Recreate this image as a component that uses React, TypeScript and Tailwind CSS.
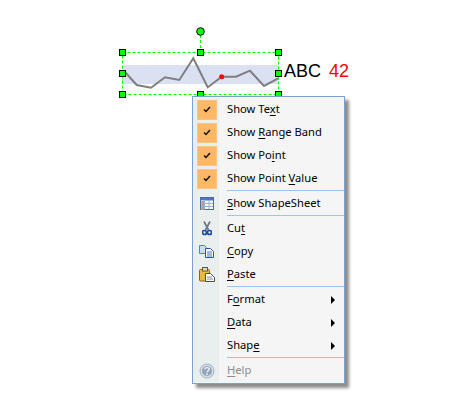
const points = "125,72 136.7,85 151,87.7 165,77.3 179.3,80 193.3,58.3 207.7,87.3 221.7,76.7 236,76.7 250,70.7 264,86 278.3,78.3";

const handles = [
  [122.5, 52.5],
  [200.5, 52.5],
  [278.5, 52.5],
  [122.5, 73.5],
  [278.5, 73.5],
  [122.5, 94.5],
  [200.5, 94.5],
  [278.5, 94.5],
];

function Shape() {
  return (
    <svg width="467" height="110" viewBox="0 0 467 110" className="absolute left-0 top-0">
      <rect x="122" y="65" width="156" height="19" fill="#d9e1f3" />
      <polyline points={points} fill="none" stroke="#7f7f7f" strokeWidth="2" />
      <circle cx="221.7" cy="76.7" r="2.5" fill="#ff0000" />
      <rect x="122.5" y="52.5" width="156" height="42" fill="none" stroke="#00ff00" strokeDasharray="3 2" />
      <line x1="200.5" y1="35" x2="200.5" y2="52" stroke="#00ff00" strokeDasharray="3 2" />
      <circle cx="200.5" cy="31.5" r="3.8" fill="#00ff00" stroke="#000" />
      {handles.map(([x, y]) => (
        <rect key={`${x}-${y}`} x={x - 3} y={y - 3} width="6" height="6" fill="#00ff00" stroke="#000" />
      ))}
    </svg>
  );
}

function CheckBox() {
  return (
    <div className="flex h-[20px] w-[20px] items-center justify-center border border-[#fbc57f] bg-[#ffb966]">
      <svg width="8" height="7" viewBox="0 0 8 7">
        <path d="M1 3.5 L3 5.5 L7 1" fill="none" stroke="#111" strokeWidth="1.5" />
      </svg>
    </div>
  );
}

function SheetIcon() {
  return (
    <svg width="14" height="13" viewBox="0 0 14 13">
      <rect x="0.5" y="0.5" width="13" height="12" fill="#f4f6fa" stroke="#4c6aa6" />
      <rect x="1" y="1" width="12" height="2.5" fill="#4f78c4" />
      <rect x="1" y="3.5" width="3.5" height="9" fill="#d6deee" />
      <path d="M4.5 4v8M9 4v8M1 6.5h12M1 9.5h12" stroke="#9dadcb" />
      <path d="M1.5 5h2.5M1.5 8h2.5M1.5 11h2.5" stroke="#d8332f" />
    </svg>
  );
}

function ScissorsIcon() {
  return (
    <svg width="10" height="15" viewBox="0 0 10 15">
      <path d="M2 0.5 L6.5 9M8 0.5 L3.5 9" stroke="#6f7986" strokeWidth="1.7" fill="none" />
      <circle cx="2.5" cy="11.5" r="2" fill="#e9eeee" stroke="#1f49a8" strokeWidth="1.7" />
      <circle cx="7.5" cy="11.5" r="2" fill="#e9eeee" stroke="#1f49a8" strokeWidth="1.7" />
    </svg>
  );
}

function CopyIcon() {
  return (
    <svg width="16" height="13" viewBox="0 0 16 13">
      <path d="M0.5 0.5h5l2 2v6h-7z" fill="#c9dcf7" stroke="#4f7fce" />
      <path d="M6.5 3.5h5l3 3v6h-8z" fill="#fff" stroke="#2456ac" />
      <path d="M8 7h5M8 9h5M8 11h5" stroke="#3f72c8" />
    </svg>
  );
}

function PasteIcon() {
  return (
    <svg width="16" height="15" viewBox="0 0 16 15">
      <rect x="0.5" y="2.5" width="10" height="11.5" rx="1" fill="#e9b93f" stroke="#8a6414" />
      <rect x="3.5" y="0.5" width="5" height="3.5" fill="#e8dcb4" stroke="#5f5a48" />
      <path d="M6.5 6.5h5l4 4v4h-9z" fill="#fff" stroke="#4d4d4d" />
      <path d="M8 10h5M8 12h6" stroke="#8a8a8a" />
    </svg>
  );
}

function HelpIcon() {
  return (
    <svg width="16" height="16" viewBox="0 0 16 16">
      <circle cx="8" cy="8" r="7" fill="#d5dde6" stroke="#a5b3c4" />
      <circle cx="8" cy="8" r="5" fill="#93a5ba" />
      <path d="M6 6.3c0-2.3 4.2-2.3 4.2 0 0 1.5-2.1 1.5-2.1 3" fill="none" stroke="#eef2f6" strokeWidth="1.4" />
      <rect x="7.3" y="10.3" width="1.6" height="1.6" fill="#eef2f6" />
    </svg>
  );
}

function Label({ before, key_, after }: { before: string; key_: string; after: string }) {
  return (
    <span>
      {before}
      <span className="underline underline-offset-2">{key_}</span>
      {after}
    </span>
  );
}

type Item = {
  before: string;
  key_: string;
  after: string;
  icon?: React.ReactNode;
  sub?: boolean;
  disabled?: boolean;
};

function Row({ item }: { item: Item }) {
  return (
    <div className="relative flex h-[23px] items-center">
      <div className="flex h-full w-[26px] shrink-0 items-center justify-center bg-[#e9eeee] pl-[1px]">{item.icon}</div>
      <div className={`flex-1 pl-[8px] ${item.disabled ? "text-[#8d8d8d]" : "text-[#000]"}`}>
        <Label before={item.before} key_={item.key_} after={item.after} />
      </div>
      {item.sub && <div className="mr-[9px] h-0 w-0 border-y-[4px] border-l-[4px] border-y-transparent border-l-black" />}
    </div>
  );
}

function Separator() {
  return (
    <div className="flex h-[2px]">
      <div className="w-[26px] bg-[#e9eeee]" />
      <div className="ml-[8px] h-[1px] flex-1 bg-[#9dc3ee]" />
    </div>
  );
}

const groups: Item[][] = [
  [
    { before: "Show Te", key_: "x", after: "t", icon: <CheckBox /> },
    { before: "Show ", key_: "R", after: "ange Band", icon: <CheckBox /> },
    { before: "Show Po", key_: "i", after: "nt", icon: <CheckBox /> },
    { before: "Show Point ", key_: "V", after: "alue", icon: <CheckBox /> },
  ],
  [{ before: "", key_: "S", after: "how ShapeSheet", icon: <SheetIcon /> }],
  [
    { before: "Cu", key_: "t", after: "", icon: <ScissorsIcon /> },
    { before: "", key_: "C", after: "opy", icon: <CopyIcon /> },
    { before: "", key_: "P", after: "aste", icon: <PasteIcon /> },
  ],
  [
    { before: "F", key_: "o", after: "rmat", sub: true },
    { before: "", key_: "D", after: "ata", sub: true },
    { before: "Shap", key_: "e", after: "", sub: true },
  ],
  [{ before: "", key_: "H", after: "elp", icon: <HelpIcon />, disabled: true }],
];

export default function App() {
  return (
    <div className="relative h-[410px] w-[467px] overflow-hidden bg-white">
      <Shape />
      <div className="absolute left-[284px] top-[61px] flex gap-[8px] text-[18px] leading-[21px] font-['Liberation_Sans',sans-serif]">
        <span className="text-black">ABC</span>
        <span className="text-[#ff0000]">42</span>
      </div>
      <div className="absolute left-[192px] top-[96px] w-[153px] border border-[#7ba1d2] bg-[#f5f5f5] py-[1px] text-[11.2px] font-['Noto_Sans',sans-serif] shadow-[4px_4px_3px_rgba(0,0,0,0.45)]">
        {groups.map((group, i) => (
          <div key={i}>
            {i > 0 && <Separator />}
            {group.map((item) => (
              <Row key={item.before + item.key_} item={item} />
            ))}
          </div>
        ))}
      </div>
    </div>
  );
}
